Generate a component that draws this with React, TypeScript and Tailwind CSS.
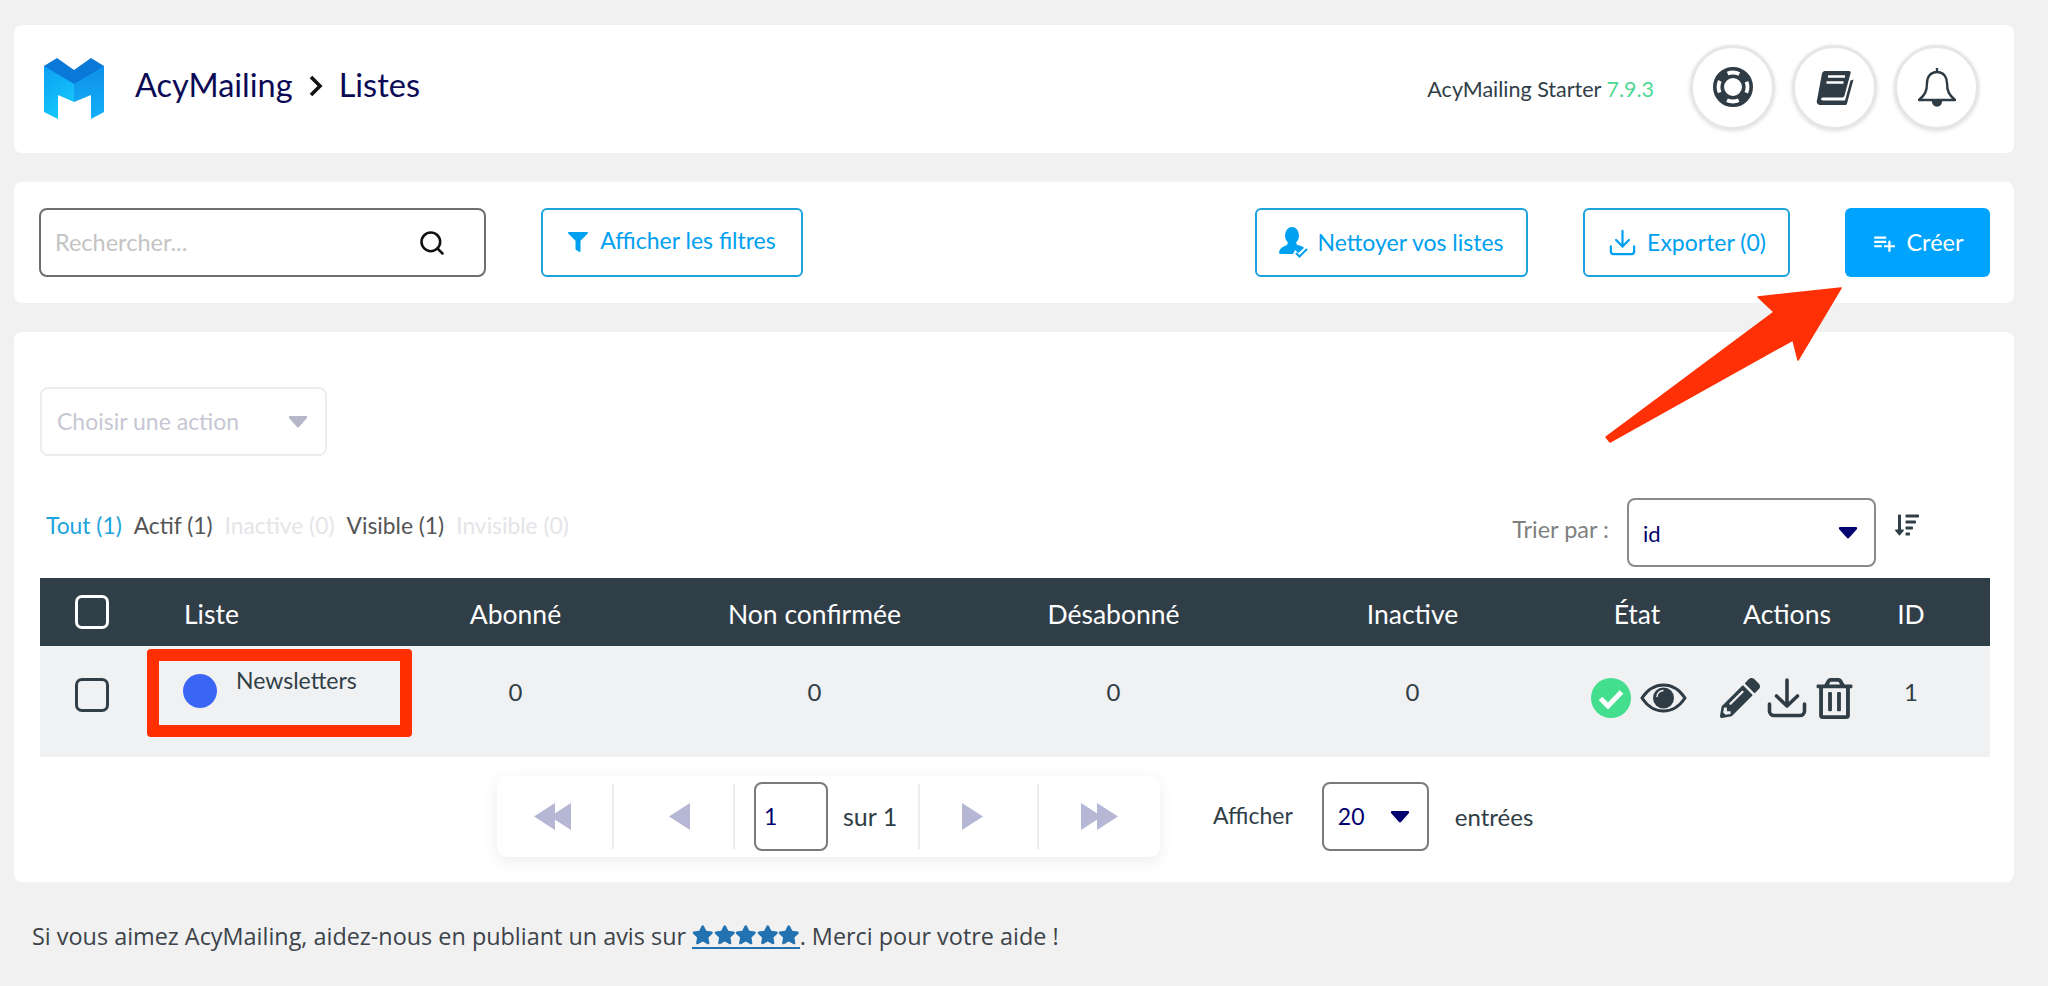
import React from "react"
import { FaFilter, FaPencilAlt, FaRegTrashAlt, FaStar, FaSortAmountDown } from "react-icons/fa"
import { MdPlaylistAdd } from "react-icons/md"
import { Search, Download } from "lucide-react"

const Logo = () => (
  <svg width="63" height="62" viewBox="0 0 63 62">
    <defs>
      <linearGradient id="lg" x1="0" y1="0" x2="0.4" y2="1">
        <stop offset="0" stopColor="#0d9ef2" />
        <stop offset="1" stopColor="#14c8fb" />
      </linearGradient>
      <linearGradient id="rg" x1="0" y1="0" x2="0" y2="1">
        <stop offset="0" stopColor="#0f8fe8" />
        <stop offset="1" stopColor="#12b0f8" />
      </linearGradient>
    </defs>
    <polygon points="1,8 1,54 15,61 15,37 31,44 31,12" fill="url(#lg)" />
    <polygon points="61,8 61,54 48,61 48,37 31,44 31,12" fill="url(#rg)" />
    <polygon points="1,8 14,0 31,12 48,0 61,8 31,26" fill="#0a78d6" />
  </svg>
)

const Ring = () => (
  <svg width="40" height="40" viewBox="0 0 40 40">
    <circle cx="20" cy="20" r="14.500" fill="none" stroke="#2f3c46" strokeWidth="11" />
    <circle cx="20" cy="20" r="14.500" fill="none" stroke="#fff" strokeWidth="3.800" strokeDasharray="12 10.780" strokeDashoffset="6" />
  </svg>
)

const Book = () => (
  <svg width="38" height="35" viewBox="0 0 38 35">
    <path d="M9 1h24c1.500 0 2 1 1.500 2.500l-6 22c-.5 1.500-1.500 2-3 2H7c-2.500 0-2.500 3 0 3h22l5.500-20 3-1-6.500 24c-.3 1-1 1.500-2 1.500H5c-3 0-5-2-4-5L6 3.500C6.500 2 7.500 1 9 1z" fill="#2f3c46" />
    <path d="M12 6.500h17M10.500 12.500h17" stroke="#fff" strokeWidth="2.500" />
  </svg>
)

const Bell = () => (
  <svg width="38" height="40" viewBox="0 0 38 40" fill="none" stroke="#2f3c46" strokeWidth="2.400" strokeLinejoin="round">
    <path d="M19 1v4M19 5c-6.500 0-10 5-10 11 0 8-2 12-8 17h36c-6-5-8-9-8-17 0-6-3.500-11-10-11z" />
    <path d="M15 34c0 6 8 6 8 0z" fill="#2f3c46" />
  </svg>
)

const Eye = () => (
  <svg width="47" height="30" viewBox="0 0 47 30">
    <path d="M2 15C8 6 15 2 23.500 2S39 6 45 15c-6 9-13 13-21.500 13S8 24 2 15z" fill="none" stroke="#2f3c46" strokeWidth="3" />
    <circle cx="23.500" cy="15" r="10.500" fill="#2f3c46" />
    <path d="M17 14c0-4 3-6.500 6.500-6.500" fill="none" stroke="#f0f1f2" strokeWidth="1.500" />
  </svg>
)

const CheckBadge = () => (
  <svg width="40" height="40" viewBox="0 0 40 40">
    <circle cx="20" cy="20" r="20" fill="#43de8e" />
    <path d="M9.500 20.500l7.500 7.500 13.500-14" fill="none" stroke="#fff" strokeWidth="5" />
  </svg>
)

const Dl = () => (
  <svg width="40" height="40" viewBox="0 0 40 40" fill="none" stroke="#2f3c46" strokeWidth="3.600" strokeLinecap="round" strokeLinejoin="round">
    <path d="M2.500 26v7a4.500 4.500 0 0 0 4.500 4.500h26a4.500 4.500 0 0 0 4.500-4.500v-7" />
    <path d="M20 2v26M9.500 18L20 28l10.500-10" />
  </svg>
)

const UserCheck = () => (
  <svg width="30" height="31" viewBox="0 0 30 31" fill="#00a0f0">
    <ellipse cx="13" cy="8.500" rx="7" ry="8.500" />
    <path d="M9 15h8l1 3c4 .5 6 1.500 7 3l-5.500 5-3.500-3-2 4H1c-1.500 0-1-3 0-4.500S5 19 8 18z" />
    <path d="M17 26l3.500 3.500L28 22" fill="none" stroke="#00a0f0" strokeWidth="2" />
  </svg>
)

const Caret = ({ color = "#00006e", w = 20, h = 13 }: { color?: string; w?: number; h?: number }) => (
  <svg width={w} height={h} viewBox="0 0 20 13">
    <path d="M2 1h16c1 0 1.500 1 1 2l-8 9c-.5.500-1.500.500-2 0l-8-9c-.5-1 0-2 1-2z" fill={color} />
  </svg>
)

const Tri = ({ dir, double }: { dir: "left" | "right"; double?: boolean }) => (
  <svg width={double ? 37 : 21} height="27" viewBox={double ? "0 0 37 27" : "0 0 21 27"} fill="#b5b7d4">
    {dir === "left" ? (
      double ? (
        <>
          <polygon points="21,0 21,27 0,13.500" />
          <polygon points="37,0 37,27 16,13.500" />
        </>
      ) : (
        <polygon points="21,0 21,27 0,13.500" />
      )
    ) : double ? (
      <>
        <polygon points="0,0 0,27 21,13.500" />
        <polygon points="16,0 16,27 37,13.500" />
      </>
    ) : (
      <polygon points="0,0 0,27 21,13.500" />
    )}
  </svg>
)

const OutlineBtn = ({ className, children }: { className: string; children: React.ReactNode }) => (
  <div className={`h-[69px] flex items-center justify-center rounded-[6px] border-2 border-[#1ba3dc] text-[#00a0f0] text-[23px] ${className}`}>
    {children}
  </div>
)

const Round = ({ children }: { children: React.ReactNode }) => (
  <div className="w-[85px] h-[85px] rounded-full bg-white flex items-center justify-center border-[3px] border-[#e6e6e6] shadow-[0_1px_4px_rgba(0,0,0,0.14)]">
    {children}
  </div>
)

const cols = "grid grid-cols-[104px_222px_299px_299px_299px_299px_150px_150px_98px_1fr] items-center"

export default function App() {
  return (
    <div className="relative w-[2048px] h-[986px] overflow-hidden bg-[#f1f1f1] pl-[14px] pr-[34px] pt-[25px] font-['Lato',sans-serif] text-[#303e47]">
      {/* header */}
      <header className="h-[128px] bg-white rounded-[8px] flex items-center pl-[29px] pr-[35px]">
        <Logo />
        <h1 className="ml-[29px] mt-[-7px] text-[32.500px] text-[#0a0a55] flex items-center">
          AcyMailing
          <svg className="mx-[15px]" width="16" height="24" viewBox="0 0 16 24"><path d="M3 3l9 9-9 9" fill="none" stroke="#111" strokeWidth="3.600" /></svg>
          Listes
        </h1>
        <div className="ml-auto mr-[36px] text-[21.500px] mt-[1px]">AcyMailing Starter <span className="text-[#4fd894]">7.9.3</span></div>
        <div className="flex gap-[17px] mt-[-4px]">
          <Round><Ring /></Round>
          <Round><Book /></Round>
          <Round><Bell /></Round>
        </div>
      </header>

      {/* toolbar */}
      <section className="mt-[29px] h-[121px] bg-white rounded-[8px] flex items-center pl-[25px] pr-[24px]">
        <div className="w-[447px] h-[69px] rounded-[8px] border-2 border-[#6f6f6f] flex items-center pl-[14px] pr-[38px] justify-between text-[23.500px] text-[#c4c4c4]">
          Rechercher...
          <Search size={28} color="#111" strokeWidth={2.200} />
        </div>
        <OutlineBtn className="ml-[55px] w-[262px] gap-[12px] pb-[4px]"><FaFilter size={20} className="mt-[3px]" />Afficher les filtres</OutlineBtn>
        <OutlineBtn className="ml-auto w-[273px] gap-[8px]">
          <UserCheck />
          Nettoyer vos listes
        </OutlineBtn>
        <OutlineBtn className="ml-[55px] w-[207px] gap-[9px]"><Download size={31} strokeWidth={1.700} />Exporter (0)</OutlineBtn>
        <div className="ml-[55px] w-[145px] h-[69px] rounded-[6px] bg-[#00a4ff] text-white text-[23.500px] flex items-center justify-center gap-[9px]">
          <MdPlaylistAdd size={26} />Créer
        </div>
      </section>

      {/* list */}
      <section className="mt-[29px] h-[550px] bg-white rounded-[8px] pl-[26px] pr-[24px] pt-[55px]">
        <div className="w-[287px] h-[69px] rounded-[8px] border-2 border-[#ececf1] flex items-center justify-between pl-[15px] pr-[17px] text-[23px] text-[#c6c7d4]">
          Choisir une action
          <Caret color="#b5b6c8" />
        </div>

        <div className="mt-[42px] h-[69px] flex items-center">
          <div className="flex gap-[12px] pl-[6px] mb-[14px] text-[22.800px]">
            <span className="text-[#1ba3dc]">Tout (1)</span>
            <span className="text-[#555]">Actif (1)</span>
            <span className="text-[#e4e5e8]">Inactive (0)</span>
            <span className="text-[#555]">Visible (1)</span>
            <span className="text-[#e4e5e8]">Invisible (0)</span>
          </div>
          <span className="ml-auto text-[23.500px] text-[#808080] mr-[18px] mb-[6px]">Trier par :</span>
          <div className="w-[249px] h-[69px] rounded-[8px] border-2 border-[#8a8a8a] flex items-center justify-between pl-[14px] pr-[16px] text-[22px] text-[#00006e]">
            <span className="mt-[2px]">id</span>
            <Caret />
          </div>
          <FaSortAmountDown size={24} className="ml-[19px] mr-[71px] mb-[16px]" />
        </div>

        <div className={`${cols} mt-[11px] h-[68px] bg-[#303e47] text-white text-[26.500px]`}>
          <div className="w-[34px] h-[34px] ml-[35px] rounded-[7px] border-[3px] border-white" />
          <div className="text-left pl-[40px] mt-[5px]">Liste</div>
          <div className="text-center mt-[5px]">Abonné</div>
          <div className="text-center mt-[5px]">Non confirmée</div>
          <div className="text-center mt-[5px]">Désabonné</div>
          <div className="text-center mt-[5px]">Inactive</div>
          <div className="text-center mt-[5px]">État</div>
          <div className="text-center mt-[5px]">Actions</div>
          <div className="text-center mt-[5px]">ID</div>
        </div>
        <div className={`${cols} h-[111px] bg-[#f0f1f2] text-[24px]`}>
          <div className="w-[34px] h-[34px] ml-[35px] mb-[14px] rounded-[7px] border-[3px] border-[#303e47]" />
          <div className="self-start pt-[28px] pl-[39px] flex items-start gap-[19px]">
            <div className="w-[34px] h-[34px] shrink-0 rounded-full bg-[#3a66f5]" />
            <span className="mt-[-11px] text-[23px]">Newsletters</span>
          </div>
          <div className="text-center mb-[20px]">0</div>
          <div className="text-center mb-[20px]">0</div>
          <div className="text-center mb-[20px]">0</div>
          <div className="text-center mb-[20px]">0</div>
          <div className="flex items-center justify-center gap-[9px] mb-[7px] pl-[4px]">
            <CheckBadge />
            <Eye />
          </div>
          <div className="flex items-center justify-center gap-[7px] mb-[7px]">
            <FaPencilAlt size={40} />
            <Dl />
            <FaRegTrashAlt size={41} />
          </div>
          <div className="text-center mb-[20px]">1</div>
        </div>

        {/* pagination */}
        <div className="mt-[19px] flex items-center text-[23px]">
          <div className="ml-[457px] w-[663px] h-[81px] bg-white rounded-[10px] shadow-[0_4px_16px_rgba(0,0,0,0.08)] flex items-center">
            <div className="w-[117px] h-[65px] border-r-2 border-[#ececec] flex items-center pl-[37px]"><Tri dir="left" double /></div>
            <div className="w-[121px] h-[65px] border-r-2 border-[#ececec] flex items-center pl-[55px]"><Tri dir="left" /></div>
            <div className="ml-[19px] w-[74px] h-[69px] rounded-[8px] border-2 border-[#7a7a7a] flex items-center pl-[8px] text-[#00006e]">1</div>
            <span className="ml-[15px] w-[75px] text-[25px] text-[#303e47]">sur 1</span>
            <div className="w-[121px] h-[65px] border-x-2 border-[#ececec] flex items-center pl-[42px]"><Tri dir="right" /></div>
            <div className="flex-1 flex items-center pl-[42px]"><Tri dir="right" double /></div>
          </div>
          <span className="ml-[53px] mb-[2px]">Afficher</span>
          <div className="ml-[29px] w-[107px] h-[69px] rounded-[8px] border-2 border-[#7a7a7a] flex items-center justify-between pl-[14px] pr-[17px] text-[#00006e]">
            20<Caret />
          </div>
          <span className="ml-[26px] text-[24px]">entrées</span>
        </div>
      </section>

      {/* footer */}
      <p className="mt-[37px] ml-[18px] flex items-center text-[23.400px] font-['Open_Sans',sans-serif] text-[#3c434a]">
        Si vous aimez AcyMailing, aidez-nous en publiant un avis sur&nbsp;
        <span className="flex border-b-2 border-[#2271b1] text-[#2271b1] pb-[2px]">
          <FaStar size={21.500} /><FaStar size={21.500} /><FaStar size={21.500} /><FaStar size={21.500} /><FaStar size={21.500} />
        </span>
        . Merci pour votre aide !
      </p>

      {/* annotations */}
      <div className="absolute left-[147px] top-[649px] w-[265px] h-[88px] rounded-[4px] border-[12px] border-[#ff2f00]" />
      <svg className="absolute left-0 top-0" width="2048" height="986" viewBox="0 0 2048 986">
        <polygon points="1841,288 1758,297 1774,312 1606,437 1610,442 1793,340 1798,360" fill="#ff3005" stroke="#ff3005" strokeWidth="1.500" strokeLinejoin="round" />
      </svg>
    </div>
  )
}
